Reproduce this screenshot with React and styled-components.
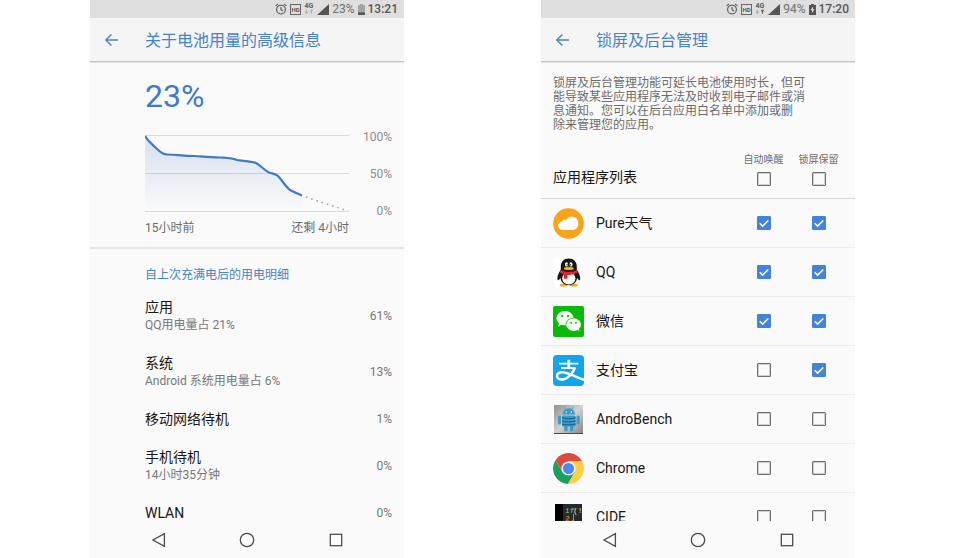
import { useState } from "react";
import styled, { createGlobalStyle } from "styled-components";

const GlobalStyle = createGlobalStyle`
  * {
    box-sizing: border-box;
  }

  body {
    margin: 0;
    background-color: #fff;
    font-family: Roboto, "Noto Sans CJK SC", sans-serif;
    color: #161616;
  }
`;

const Page = styled.main`
  display: grid;
  grid-template-columns: 1fr 1fr;
  column-gap: 137px;
  padding: 0 105px 0 90px;
  height: 100vh;
`;

const StyledPhone = styled.section`
  display: flex;
  flex-direction: column;
  min-width: 0;
  min-height: 0;
  background-color: #fafafa;
`;

const StatusBar = styled.div`
  display: flex;
  flex: none;
  align-items: center;
  justify-content: flex-end;
  gap: 3px;
  height: 18px;
  padding-right: 6px;
  background-color: #dfdfdf;
  color: #6e6e6e;
  font-size: 12px;
  line-height: 18px;
`;

const Clock = styled.time`
  color: #555;
  font-weight: 500;
`;

const AppBar = styled.header`
  display: flex;
  flex: none;
  align-items: center;
  gap: 26px;
  height: 44px;
  padding-left: 14px;
  background-color: #f5f5f5;
  border-bottom: 1px solid #c4c4c4;
  box-shadow: 0 1px 1px #e6e6e6;
`;

const IconButton = styled.button`
  display: flex;
  align-items: center;
  justify-content: center;
  padding: 0;
  border: 0;
  background: none;
  color: inherit;
  cursor: pointer;
`;

const Title = styled.h1`
  margin: 0;
  padding-top: 2px;
  color: #4583cb;
  font-size: 16px;
  font-weight: 400;
  line-height: 24px;
`;

const Content = styled.div`
  flex: 1;
  min-height: 0;
  overflow: hidden;
`;

const NavBar = styled.nav`
  display: grid;
  flex: none;
  grid-template-columns: repeat(3, 1fr);
  height: 37px;
  padding: 0 24px;
  color: #4d4d4d;
`;

/* Battery screen */

const Summary = styled.div`
  padding: 15px 12px 11px 55px;
  border-bottom: 2px solid #e4e4e4;
`;

const Level = styled.div`
  margin-bottom: 13px;
  color: #4179c9;
  font-size: 32px;
  line-height: 38px;
`;

const Chart = styled.div`
  display: grid;
  grid-template-columns: 1fr 43px;

  svg {
    display: block;
    width: 100%;
    height: 92px;
  }
`;

const Scale = styled.div`
  display: flex;
  flex-direction: column;
  justify-content: space-between;
  color: #8c8c8c;
  font-size: 12px;
  line-height: 18px;
  text-align: right;
`;

const TimeAxis = styled.div`
  display: flex;
  justify-content: space-between;
  color: #6c6c6c;
  font-size: 12px;
  line-height: 16px;
`;

const SectionTitle = styled.h2`
  margin: 17px 12px 4px 55px;
  color: #4583cb;
  font-size: 12px;
  font-weight: 400;
  line-height: 18px;
`;

const UsageList = styled.ul`
  margin: 0;
  padding: 0;
  list-style: none;
`;

const UsageRow = styled.li`
  display: flex;
  align-items: center;
  justify-content: space-between;
  padding: 10px 12px 10px 55px;
  color: #777;
  font-size: 12px;
  line-height: 18px;
`;

const UsageName = styled.div`
  color: #161616;
  font-size: 14px;
`;

/* Lock screen cleanup */

const Description = styled.p`
  margin: 0;
  padding: 14px 12px 0;
  color: #6c6c6c;
  font-size: 12px;
  line-height: 14px;
`;

const AppTable = styled.table`
  width: 100%;
  table-layout: fixed;
  border-spacing: 0;
`;

const HeadCell = styled.th`
  width: ${(props) => props.$width || "auto"};
  height: 67px;
  padding: ${(props) => props.$padding};
  border-bottom: 1px solid #d8d8d8;
  font-size: 14px;
  font-weight: 400;
  line-height: 20px;
  text-align: left;
  vertical-align: bottom;
`;

const ColumnLabel = styled.label`
  display: flex;
  flex-direction: column;
  align-items: center;
  gap: 5px;
  color: #6c6c6c;
  font-size: 10px;
  line-height: 14px;
  white-space: nowrap;
`;

const Cell = styled.td`
  height: 49px;
  padding: ${(props) => props.$padding || "0"};
  border-bottom: 1px solid #ececec;
`;

const AppName = styled.div`
  display: flex;
  align-items: center;
  gap: 12px;
  font-size: 14px;
  line-height: 20px;

  svg {
    flex: none;
  }
`;

const Checkbox = styled.input.attrs({ type: "checkbox" })`
  display: block;
  appearance: none;
  width: 14px;
  height: 14px;
  margin: 0 auto;
  border: 1px solid #6f6f6f;
  border-radius: 1px;
  box-shadow: inset 0 0 0 1px #cfcfcf;

  &:checked {
    border-color: #4583d8;
    background: #4583d8
      url("data:image/svg+xml,%3Csvg xmlns='http://www.w3.org/2000/svg' viewBox='0 0 12 12'%3E%3Cpath d='M1.7 6.2l2.9 2.9 5.7-5.6' fill='none' stroke='white' stroke-width='1.5'/%3E%3C/svg%3E");
    box-shadow: none;
  }
`;

function AlarmIcon() {
  return (
    <svg width="12" height="12" viewBox="0 0 12 12" fill="none" stroke="#555" strokeWidth="1.1">
      <circle cx="6" cy="6.6" r="4.4" />
      <path d="M6 4v2.8l1.9 1.2M.6 2.9L3 .9M11.4 2.9L9 .9" />
    </svg>
  );
}

function HdIcon() {
  return (
    <svg width="11" height="11" viewBox="0 0 11 11">
      <rect x=".5" y=".5" width="10" height="10" fill="none" stroke="#666" />
      <text x="5.5" y="7.6" fill="#555" fontSize="6" fontWeight="700" textAnchor="middle">HD</text>
    </svg>
  );
}

function NetworkIcon({ sending }) {
  return (
    <svg width="10" height="14" viewBox="0 0 10 14" fill="none">
      <text x="5" y="6.4" fill="#606060" fontSize="7" fontWeight="700" textAnchor="middle">4G</text>
      <path d="M2.3 7.6v3.6M.7 9.8l1.600 1.600 1.600-1.600" stroke="#aaa" />
      <path d="M7.500 11.600V8M5.900 9.400l1.600-1.600 1.600 1.600" stroke={sending ? "#555" : "#aaa"} />
    </svg>
  );
}

function SignalIcon() {
  return (
    <svg width="12" height="11" viewBox="0 0 12 11">
      <path d="M12 0v11H0z" fill="#555" />
    </svg>
  );
}

function BatteryIcon({ charging }) {
  return (
    <svg width="7" height="11" viewBox="0 0 7 11">
      <path d="M2 0h3v1h2v10H0V1h2z" fill={charging ? "#555" : "#a4a4a4"} />
      {charging ? (
        <path d="M4.2 2.4L1.4 6.2h1.8l-.5 3 2.9-4H3.8z" fill="#e6e6e6" />
      ) : (
        <path d="M0 8.4h7V11H0z" fill="#555" />
      )}
    </svg>
  );
}

function BackArrow() {
  return (
    <svg width="15" height="14" viewBox="0 0 15 14" fill="none" stroke="#4583cb" strokeWidth="1.4">
      <path d="M14 7H2M7.4 1.4L1.8 7l5.6 5.6" />
    </svg>
  );
}

function WeatherLogo() {
  return (
    <svg width="31" height="31" viewBox="0 0 31 31">
      <circle cx="15.5" cy="15.5" r="15.3" fill="#f9a31a" />
      <path
        d="M9.6 22a4.2 4.2 0 0 1-.5-8.4 3 3 0 0 1 4.4-1.6 6.2 6.2 0 0 1 11.7 2.3c1 4-1.6 7.7-5.4 7.7z"
        fill="#fff"
      />
    </svg>
  );
}

function QQLogo() {
  return (
    <svg width="31" height="31" viewBox="0 0 31 31">
      <rect width="31" height="31" rx="6" fill="#fff" />
      <ellipse cx="10.8" cy="28.1" rx="4" ry="1.6" fill="#f6a81c" />
      <ellipse cx="20.8" cy="28.1" rx="4" ry="1.6" fill="#f6a81c" />
      <path
        d="M15.8 1.6c-5 0-8 3.5-8 8v3.2C6 15.6 4.4 18.5 4.4 21c0 1.6.3 2.3.8 2.3.7 0 1.6-1.2 2.2-2.5.5 4.3 3.6 7.4 8.4 7.400s7.900-3.100 8.400-7.400c.6 1.300 1.500 2.500 2.200 2.500.5 0 .8-.7.8-2.300 0-2.500-1.600-5.400-3.400-8.200V9.600c0-4.500-3-8-8-8z"
        fill="#161616"
      />
      <ellipse cx="15.8" cy="21.3" rx="6.6" ry="6.2" fill="#fff" />
      <ellipse cx="13.5" cy="7.4" rx="1.5" ry="2.2" fill="#fff" />
      <ellipse cx="18" cy="7.4" rx="1.5" ry="2.2" fill="#fff" />
      <circle cx="14" cy="7.7" r=".7" fill="#161616" />
      <circle cx="17.5" cy="7.7" r=".7" fill="#161616" />
      <ellipse cx="15.8" cy="11.4" rx="5" ry="1.6" fill="#f6a81c" />
      <path
        d="M7.6 12.8c5 2.9 11.4 2.9 16.4 0l.7 2.7c-3 1.9-6.5 2.6-10.3 2.4v3.600c-1.200.4-2.600.4-3.600 0v-4.200c-1.500-.4-2.800-.9-3.900-1.700z"
        fill="#e0242b"
      />
    </svg>
  );
}

function WeChatLogo() {
  return (
    <svg width="31" height="31" viewBox="0 0 31 31">
      <rect width="31" height="31" rx="2" fill="#09bb07" />
      <path d="M6.2 16.5L5.4 20.5l4.1-2.4z" fill="#f3fbef" />
      <ellipse cx="12" cy="12.2" rx="8.6" ry="7.2" fill="#f3fbef" />
      <ellipse cx="20.6" cy="18.6" rx="8" ry="6.9" fill="#09bb07" />
      <path d="M25.6 21.5l.9 3.6-4.2-2z" fill="#f3fbef" />
      <ellipse cx="20.6" cy="18.6" rx="7.4" ry="6.3" fill="#f3fbef" />
      <circle cx="9.1" cy="10" r="1.1" fill="#079a06" />
      <circle cx="15" cy="10" r="1.1" fill="#079a06" />
      <circle cx="18.2" cy="16.8" r=".9" fill="#079a06" />
      <circle cx="23" cy="16.8" r=".9" fill="#079a06" />
    </svg>
  );
}

function AlipayLogo() {
  return (
    <svg width="31" height="31" viewBox="0 0 31 31" fill="none" stroke="#fff">
      <rect width="31" height="31" rx="4" fill="#12a5ea" stroke="none" />
      <path d="M15.8 4.8v7.4" strokeWidth="2.8" />
      <path d="M6 8.6h19.4M8 13h14.6" strokeWidth="1.9" />
      <path
        d="M21.6 13c-1.500 4.600-5.600 10.300-11.300 11.400-3.700.7-6.300-.9-6.300-3.400 0-2.400 2.400-4 5.600-3.700 6 .5 12.200 4.300 21.400 7.600"
        strokeWidth="2.5"
      />
    </svg>
  );
}

function AndroBenchLogo() {
  return (
    <svg width="31" height="31" viewBox="0 0 31 31">
      <defs>
        <linearGradient id="steel" x1="0" y1="0" x2="1" y2="1">
          <stop offset="0" stopColor="#8f8f8f" />
          <stop offset=".5" stopColor="#d2d2d2" />
          <stop offset="1" stopColor="#858585" />
        </linearGradient>
      </defs>
      <rect x="1" y="1" width="29" height="29" rx="1" fill="url(#steel)" />
      <path d="M1 29h29v1H1z" fill="#4c4c4c" />
      <g fill="#389bcb">
        <path d="M9.5 10.5a6.3 6.3 0 0 1 12.6 0z" />
        <path d="M11.6 3.4l1.5 2.4M20 3.4l-1.5 2.4" stroke="#389bcb" />
        <rect x="5" y="11.5" width="3" height="9" rx="1.5" />
        <rect x="23.6" y="11.5" width="3" height="9" rx="1.5" />
        <rect x="11.3" y="20" width="3.2" height="7.5" rx="1.5" />
        <rect x="17" y="20" width="3.2" height="7.5" rx="1.5" />
        <rect x="9" y="11.5" width="13.6" height="11" rx="1.5" />
      </g>
      <path
        d="M9 13.8c4 1.2 9.6 1.2 13.6 0M9 17c4 1.2 9.6 1.2 13.6 0M9 20c4 1.2 9.6 1.2 13.6 0"
        fill="none"
        stroke="#195d82"
      />
      <circle cx="13.2" cy="8" r=".7" fill="#fff" />
      <circle cx="18.4" cy="8" r=".7" fill="#fff" />
    </svg>
  );
}

function ChromeLogo() {
  return (
    <svg width="31" height="31" viewBox="0 0 48 48">
      <path d="M3.82 11.05A24 24 0 0 1 45.3 13H24L14.47 29.5z" fill="#dc4b3e" />
      <path d="M45.3 13A24 24 0 0 1 22.88 47.95L33.53 29.5 24 13z" fill="#ffce45" />
      <path d="M22.88 47.95A24 24 0 0 1 3.82 11.05L14.47 29.5H33.53z" fill="#1a9f5c" />
      <circle cx="24" cy="24" r="11" fill="#f5f5f5" />
      <circle cx="24" cy="24" r="8.7" fill="#4a87ee" />
    </svg>
  );
}

function CideLogo() {
  return (
    <svg width="31" height="31" viewBox="0 0 31 31" fontFamily="Liberation Mono, monospace" fontSize="8">
      <rect x="2" y="2" width="27" height="27" fill="#232b31" />
      <rect x="2" y="2" width="8" height="27" fill="#000" />
      <text x="12" y="11" fill="#9cc65a">if</text>
      <text x="20" y="11" fill="#e4e4e4">(!</text>
      <text x="12" y="19" fill="#e09a3a">2.</text>
      <path d="M20.5 12v7" stroke="#48a7d8" />
    </svg>
  );
}

function Phone({ title, battery, charging, time, children }) {
  return (
    <StyledPhone>
      <StatusBar>
        <AlarmIcon />
        <HdIcon />
        <NetworkIcon sending={charging} />
        <SignalIcon />
        <span>{battery}</span>
        <BatteryIcon charging={charging} />
        <Clock>{time}</Clock>
      </StatusBar>
      <AppBar>
        <IconButton aria-label="返回上一页">
          <BackArrow />
        </IconButton>
        <Title>{title}</Title>
      </AppBar>
      <Content>{children}</Content>
      <NavBar>
        <IconButton aria-label="返回">
          <svg width="16" height="16" viewBox="0 0 16 16" fill="none" stroke="currentColor" strokeWidth="1.3">
            <path d="M14.4 1.7v12.6L3 8z" />
          </svg>
        </IconButton>
        <IconButton aria-label="主屏幕">
          <svg width="16" height="16" viewBox="0 0 16 16" fill="none" stroke="currentColor" strokeWidth="1.3">
            <circle cx="8" cy="8" r="6.7" />
          </svg>
        </IconButton>
        <IconButton aria-label="最近任务">
          <svg width="16" height="16" viewBox="0 0 16 16" fill="none" stroke="currentColor" strokeWidth="1.3">
            <rect x="2.3" y="2.3" width="11.4" height="11.4" />
          </svg>
        </IconButton>
      </NavBar>
    </StyledPhone>
  );
}

const usage = [
  { name: "应用", detail: "QQ用电量占 21%", percent: "61%" },
  { name: "系统", detail: "Android 系统用电量占 6%", percent: "13%" },
  { name: "移动网络待机", percent: "1%" },
  { name: "手机待机", detail: "14小时35分钟", percent: "0%" },
  { name: "WLAN", percent: "0%" },
];

const curve =
  "M0 8C4 14 8 17 11 20C15 24 18 26.5 22 26.5C32 26.5 36 28 50 28C62 29 66 29.5 75 29.5C82 30 87 30 92 32C98 33 106 33 111 35C115 37 119 42 124 44.5C128 46 131 46 133 48C137 52 140 58 145 62C149 64 152 65.5 157 67.5";

function BatteryChart() {
  return (
    <svg viewBox="0 0 204 92" preserveAspectRatio="none" fill="none">
      <defs>
        <linearGradient id="charge" x1="0" y1="0" x2="0" y2="1">
          <stop offset="0" stopColor="#4179c9" stopOpacity=".2" />
          <stop offset="1" stopColor="#4179c9" stopOpacity="0" />
        </linearGradient>
      </defs>
      <path d="M0 7.5h204M0 45.5h204M0 83.5h204" stroke="#dadada" />
      <path d={`${curve}V83H0z`} fill="url(#charge)" />
      <path d={curve} stroke="#4179c9" strokeWidth="2.2" />
      <path d="M161 69L203 83" stroke="#9aa3a8" strokeWidth="1.5" strokeDasharray="1.5 4" />
    </svg>
  );
}

function BatteryScreen() {
  return (
    <Phone title="关于电池用量的高级信息" battery="23%" time="13:21">
      <Summary>
        <Level>23%</Level>
        <Chart>
          <BatteryChart />
          <Scale>
            <span>100%</span>
            <span>50%</span>
            <span>0%</span>
          </Scale>
          <TimeAxis>
            <span>15小时前</span>
            <span>还剩 4小时</span>
          </TimeAxis>
        </Chart>
      </Summary>
      <SectionTitle>自上次充满电后的用电明细</SectionTitle>
      <UsageList>
        {usage.map((item) => (
          <UsageRow key={item.name}>
            <div>
              <UsageName>{item.name}</UsageName>
              {item.detail && <div>{item.detail}</div>}
            </div>
            <span>{item.percent}</span>
          </UsageRow>
        ))}
      </UsageList>
    </Phone>
  );
}

const initialApps = [
  { id: "pure", name: "Pure天气", Logo: WeatherLogo, wake: true, keep: true },
  { id: "qq", name: "QQ", Logo: QQLogo, wake: true, keep: true },
  { id: "wechat", name: "微信", Logo: WeChatLogo, wake: true, keep: true },
  { id: "alipay", name: "支付宝", Logo: AlipayLogo, wake: false, keep: true },
  { id: "androbench", name: "AndroBench", Logo: AndroBenchLogo, wake: false, keep: false },
  { id: "chrome", name: "Chrome", Logo: ChromeLogo, wake: false, keep: false },
  { id: "cide", name: "CIDE", Logo: CideLogo, wake: false, keep: false },
];

function LockScreen() {
  const [apps, setApps] = useState(initialApps);

  const toggle = (id, key) =>
    setApps(apps.map((app) => (app.id === id ? { ...app, [key]: !app[key] } : app)));

  const toggleAll = (key, value) => setApps(apps.map((app) => ({ ...app, [key]: value })));

  const allChecked = (key) => apps.every((app) => app[key]);

  return (
    <Phone title="锁屏及后台管理" battery="94%" time="17:20" charging>
      <Description>
        锁屏及后台管理功能可延长电池使用时长，但可
        <br />
        能导致某些应用程序无法及时收到电子邮件或消
        <br />
        息通知。您可以在后台应用白名单中添加或删
        <br />
        除来管理您的应用。
      </Description>
      <AppTable>
        <thead>
          <tr>
            <HeadCell $padding="0 0 11px 12px">应用程序列表</HeadCell>
            <HeadCell $width="55px" $padding="0 0 12px">
              <ColumnLabel>
                <span id="wake">自动唤醒</span>
                <Checkbox checked={allChecked("wake")} onChange={(e) => toggleAll("wake", e.target.checked)} />
              </ColumnLabel>
            </HeadCell>
            <HeadCell $width="64px" $padding="0 9px 12px 0">
              <ColumnLabel>
                <span id="keep">锁屏保留</span>
                <Checkbox checked={allChecked("keep")} onChange={(e) => toggleAll("keep", e.target.checked)} />
              </ColumnLabel>
            </HeadCell>
          </tr>
        </thead>
        <tbody>
          {apps.map(({ id, name, Logo, wake, keep }) => (
            <tr key={id}>
              <Cell $padding="0 0 0 12px">
                <AppName>
                  <Logo />
                  <span id={id}>{name}</span>
                </AppName>
              </Cell>
              <Cell>
                <Checkbox aria-labelledby={`${id} wake`} checked={wake} onChange={() => toggle(id, "wake")} />
              </Cell>
              <Cell $padding="0 9px 0 0">
                <Checkbox aria-labelledby={`${id} keep`} checked={keep} onChange={() => toggle(id, "keep")} />
              </Cell>
            </tr>
          ))}
        </tbody>
      </AppTable>
    </Phone>
  );
}

export default function App() {
  return (
    <>
      <GlobalStyle />
      <Page>
        <BatteryScreen />
        <LockScreen />
      </Page>
    </>
  );
}
